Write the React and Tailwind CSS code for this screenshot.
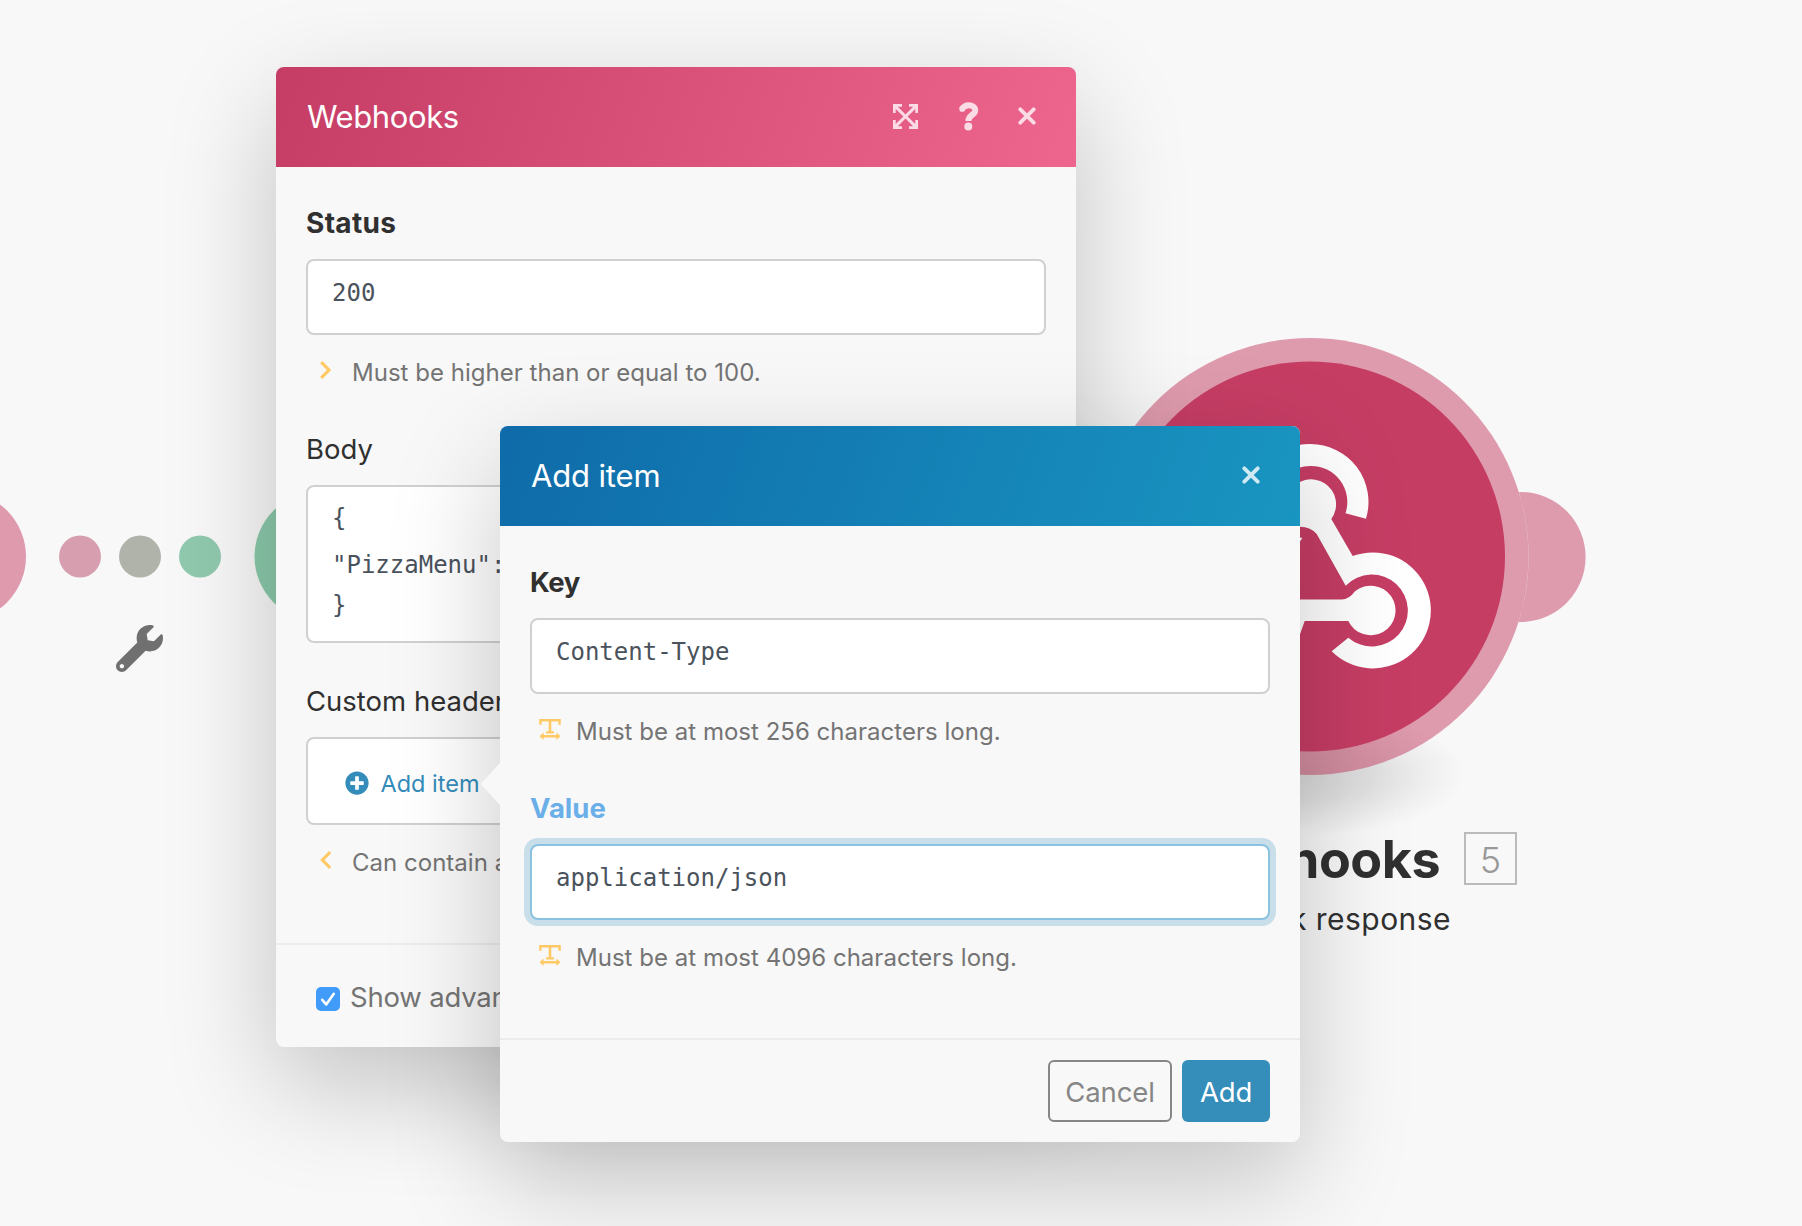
import React from "react";
import { FaWrench, FaPlusCircle } from "react-icons/fa";

function CloseIcon() {
  return (
    <svg className="h-[18px] w-[18px]" viewBox="0 0 18 18" fill="none" stroke="currentColor" strokeWidth="3.8" strokeLinecap="round">
      <path d="M2.3 2.3 15.7 15.7M15.7 2.3 2.3 15.7" />
    </svg>
  );
}

function QuestionIcon() {
  return (
    <svg className="h-[29px] w-[20px]" viewBox="0 0 20 29" fill="none" stroke="currentColor" strokeWidth="6">
      <path d="M2.6 7.6C4.6 4.2 7 3.3 9.7 3.3C13.4 3.3 16.2 5.2 16.2 8.4C16.2 13 9.4 12.6 9.4 19" />
      <circle cx="3.2" cy="6.9" r="2.9" fill="currentColor" stroke="none" />
      <circle cx="9.3" cy="24.4" r="4" fill="currentColor" stroke="none" />
    </svg>
  );
}

function ExpandIcon() {
  return (
    <svg className="h-[25px] w-[25px]" viewBox="0 0 25 25" fill="currentColor">
      <path d="M0 0h9v2.7H4.9L12.5 10.4 20.1 2.7H16V0h9v9h-2.7V4.9L14.6 12.5l7.7 7.6V16H25v9h-9v-2.7h4.1L12.5 14.6 4.9 22.3H9V25H0v-9h2.7v4.1l7.7-7.6L2.7 4.9V9H0z" />
    </svg>
  );
}

function ChevronIcon({ left }) {
  return (
    <svg className="h-[18px] w-[11px]" viewBox="0 0 11 18" fill="none" stroke="#ffca66" strokeWidth="3.2">
      {left ? <path d="M10.2 1.1 2.4 9 10.2 16.9" /> : <path d="M1.2 1.1 9 9 1.2 16.9" />}
    </svg>
  );
}

function TextWidthIcon() {
  return (
    <svg className="h-[21px] w-[22px]" viewBox="0 0 22 21" fill="#ffca66">
      <path d="M.2 0h21.6v5.8h-2.4V2.4h-7.1v9.8h2.6v2.2H7.1v-2.2h2.6V2.4H2.6v3.4H.2z" />
      <path d="M.4 17.2 4.6 13.5v2.6h12.8v-2.6l4.2 3.7-4.2 3.8v-2.6H4.6V21z" />
    </svg>
  );
}

function Hint({ icon, children }) {
  return (
    <div className="mt-5 flex h-9 items-center">
      <span className="flex w-[46px] shrink-0 -translate-y-[3px] justify-start">{icon}</span>
      <span className="whitespace-nowrap text-[24px] leading-9 tracking-[0.02px] text-[#747474]">{children}</span>
    </div>
  );
}

function Label({ className = "text-[27.5px] text-[#303030]", children }) {
  return <div className={"mb-[18px] whitespace-nowrap leading-9 " + className}>{children}</div>;
}

function Field({ focused, children }) {
  return (
    <div
      className={
        "h-[76px] rounded-[8px] border-2 bg-white px-6 pt-[14px] font-['DejaVu_Sans_Mono',monospace] text-[24px] leading-9 text-[#4a525c] " +
        (focused ? "border-[#8ac2df] shadow-[0_0_0_6px_#c8dfea]" : "border-[#d0d0d0]")
      }
    >
      {children}
    </div>
  );
}

function Canvas() {
  return (
    <>
      <svg className="absolute inset-0 h-[1226px] w-[1802px]" viewBox="0 0 1802 1226">
        <defs>
          <radialGradient id="ground">
            <stop offset="0" stopColor="#000" stopOpacity="0.13" />
            <stop offset="0.4" stopColor="#000" stopOpacity="0.1" />
            <stop offset="0.75" stopColor="#000" stopOpacity="0.04" />
            <stop offset="1" stopColor="#000" stopOpacity="0" />
          </radialGradient>
          <mask id="outside">
            <rect width="1802" height="1226" fill="#fff" />
            <circle cx="1310" cy="556.5" r="218.6" fill="#000" />
          </mask>
        </defs>
        <circle cx="-39" cy="556.5" r="65" fill="#df9aae" />
        <circle cx="80" cy="556.5" r="21" fill="#d69eae" />
        <circle cx="140" cy="556.5" r="21" fill="#b0b3aa" />
        <circle cx="200" cy="556.5" r="21" fill="#90c9ae" />
        <circle cx="319.5" cy="556.5" r="65" fill="#8bcaab" />
        <ellipse cx="1310" cy="774" rx="156" ry="62" fill="url(#ground)" />
        <circle cx="1520.6" cy="557" r="65" fill="#c63d64" fillOpacity="0.5" mask="url(#outside)" />
        <circle cx="1310" cy="556.5" r="218.5" fill="#c63d64" fillOpacity="0.5" />
        <circle cx="1310" cy="556.5" r="195" fill="#c63d64" />
        <g fill="#fff">
          <path d="M1366 518.8A58 58 0 0 0 1310.3 444Q1268 444 1255 486L1276 492Q1285 466 1310.3 466A36 36 0 0 1 1345.5 513.3Z" />
          <path d="M1331.3 519A25 25 0 1 0 1300 526.7Q1311 527 1316.7 534L1345.7 585.7A36 36 0 1 1 1348.3 637.7L1331.7 651.3A58 58 0 1 0 1352.7 556Z" />
          <path d="M1290 599.5H1341.7Q1349 599.5 1355 591.3A24.8 24.8 0 1 1 1348.3 621H1304.7L1298 640H1290Z" />
          <path d="M1294 536 1302.3 538 1299 543 1294 549Z" />
        </g>
      </svg>
      <FaWrench className="absolute left-[116px] top-[625px] h-[47px] w-[47px] text-[#707070]" />
      <div className="absolute right-[362px] top-[830px] whitespace-nowrap text-[52px] font-bold leading-[60px] tracking-[-0.5px] text-[#303030]">
        Webhooks
      </div>
      <div className="absolute left-[1464px] top-[832px] flex h-[53px] w-[53px] items-center justify-center border-[2.5px] border-[#bbbbbb] pt-[2px] text-[36px] font-[350] leading-none text-[#999999]">
        5
      </div>
      <div className="absolute right-[351px] top-[899px] whitespace-nowrap text-[30px] leading-[40px] tracking-[0.45px] text-[#303030]">
        Webhook response
      </div>
    </>
  );
}

const shadow = "shadow-[0_38px_110px_rgba(0,0,0,0.22)]";

export default function App() {
  return (
    <div className="relative h-[1226px] w-[1802px] overflow-hidden bg-[#f8f8f8] font-[Inter,sans-serif]">
      <Canvas />

      <section className={"absolute left-[276px] top-[67px] flex h-[980px] w-[800px] flex-col rounded-[8px] bg-[#f8f8f8] " + shadow}>
        <header className="flex h-[100px] items-center rounded-t-[8px] bg-[linear-gradient(110deg,#c53c64,#ee668e)] pl-[31px] pr-10 text-white">
          <h1 className="flex-1 text-[31px] tracking-[-0.4px]">Webhooks</h1>
          <div className="-mt-[2px] flex items-center text-[#fbdbe5]">
            <ExpandIcon />
            <span className="ml-[41px] mr-[39px]"><QuestionIcon /></span>
            <CloseIcon />
          </div>
        </header>
        <div className="flex-1 px-[30px] pt-[38px]">
          <Label className="text-[28px] font-bold tracking-[0.3px] text-[#303030]">Status</Label>
          <Field>200</Field>
          <Hint icon={<span className="ml-[14px]"><ChevronIcon /></span>}>Must be higher than or equal to 100.</Hint>
          <div className="mt-[40px]">
            <Label>Body</Label>
            <div className="h-[158px] rounded-[8px] border-2 border-[#d0d0d0] bg-white px-6 pt-[11px] font-['DejaVu_Sans_Mono',monospace] text-[24px] text-[#4a525c]">
              <div className="leading-[40px]">{"{"}</div>
              <div className="leading-[54px]">{'"PizzaMenu":'}</div>
              <div className="leading-[26px]">{"}"}</div>
            </div>
          </div>
          <div className="mt-[40px]">
            <Label>Custom headers</Label>
            <div className="flex h-[88px] items-center rounded-[8px] border-2 border-[#d0d0d0] bg-white pl-[37px] text-[#348cba]">
              <FaPlusCircle className="mt-[3px] h-6 w-6" />
              <span className="ml-[11.5px] pt-[5px] text-[23.5px]">Add item</span>
            </div>
            <Hint icon={<span className="ml-[14px]"><ChevronIcon left /></span>}>Can contain at most</Hint>
          </div>
        </div>
        <footer className="flex h-[104px] items-center border-t-2 border-[#ececec] pl-10">
          <span className="mt-[6px] flex h-6 w-6 items-center justify-center rounded-[5px] bg-[#409bf9]">
            <svg className="h-6 w-6" viewBox="0 0 24 24" fill="none" stroke="#fff" strokeWidth="2.6" strokeLinecap="round" strokeLinejoin="round">
              <path d="M6.2 12.8 10.2 17.4 17.8 6.8" />
            </svg>
          </span>
          <span className="ml-[10px] pt-[3px] text-[27.5px] tracking-[-0.2px] text-[#747474]">Show advanced settings</span>
        </footer>
      </section>

      <section className={"absolute left-[500px] top-[426px] flex h-[716px] w-[800px] flex-col rounded-[8px] bg-[#f8f8f8] " + shadow}>
        <svg className="absolute left-[-20px] top-[337px] h-[42px] w-[21px]" viewBox="0 0 21 42" fill="#f8f8f8">
          <path d="M20 0 .6 21 20 42h1V0z" />
        </svg>
        <header className="flex h-[100px] items-center justify-between rounded-t-[8px] bg-[linear-gradient(110deg,#0f6ba9,#1995c1)] pl-[31px] pr-10 text-white">
          <h2 className="text-[31px] tracking-[-0.15px]">Add item</h2>
          <span className="-mt-[2px] text-[#d0eaf4]"><CloseIcon /></span>
        </header>
        <div className="flex-1 px-[30px] pt-[38px]">
          <Label className="text-[27.5px] font-bold tracking-[-0.4px] text-[#303030]">Key</Label>
          <Field>Content-Type</Field>
          <Hint icon={<span className="ml-[9px]"><TextWidthIcon /></span>}>Must be at most 256 characters long.</Hint>
          <div className="mt-[40px]">
            <Label className="text-[27.5px] font-bold text-[#6aafe8]">Value</Label>
            <Field focused>application/json</Field>
            <Hint icon={<span className="ml-[9px]"><TextWidthIcon /></span>}>Must be at most 4096 characters long.</Hint>
          </div>
        </div>
        <footer className="flex h-[104px] items-center justify-end gap-[10px] border-t-2 border-[#ececec] px-[30px] text-[27.5px] tracking-[-0.15px]">
          <button className="h-[62px] w-[124px] rounded-[6px] border-2 border-[#868686] pt-[4px] text-[#868686]">Cancel</button>
          <button className="h-[62px] w-[88px] rounded-[6px] bg-[#358dba] pt-[4px] text-white">Add</button>
        </footer>
      </section>
    </div>
  );
}
